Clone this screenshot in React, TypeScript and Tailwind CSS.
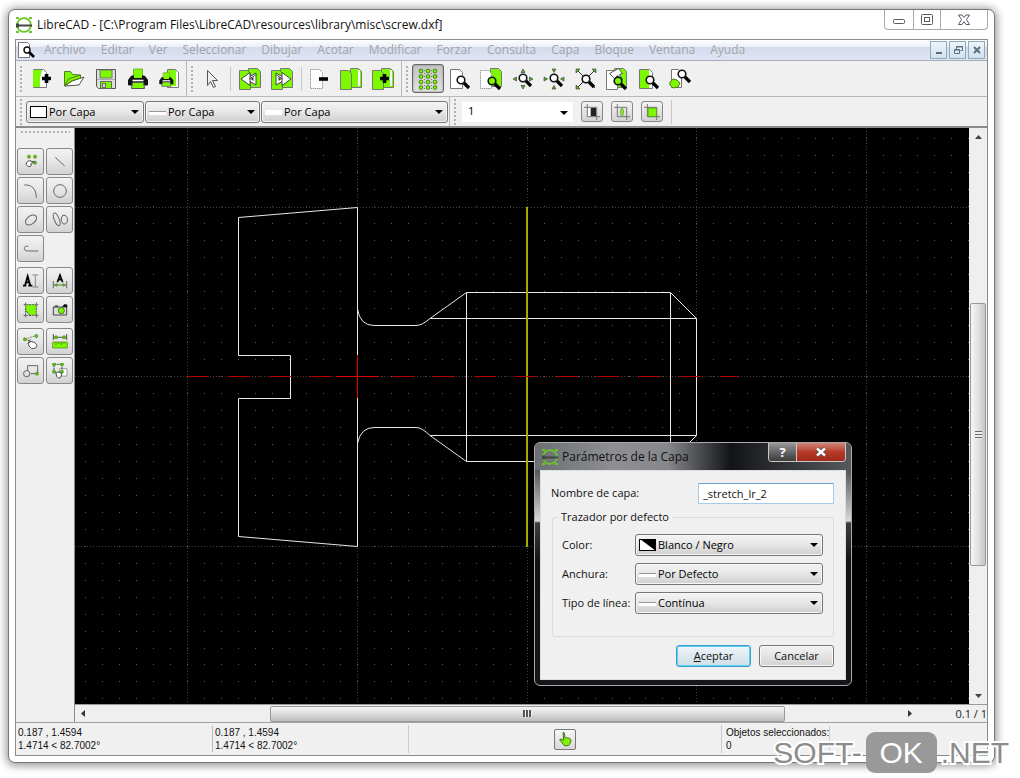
import React, { useState } from 'react';
import clsx from 'clsx';

const GREEN = '#7cf800';

interface IconProps {
  children: React.ReactNode;
  size?: string;
}

const Icon: React.FC<IconProps> = ({ children, size = 'h-6 w-6' }) => (
  <svg viewBox="0 0 24 24" className={clsx('block shrink-0', size)} fill="none" aria-hidden="true">
    {children}
  </svg>
);

/* ---------- shared icon parts ---------- */

const Sheet = ({ x = 3, y = 2, w = 12, h = 19, fill = 'white', dashed = false }) => (
  <path
    d={`M${x + 0.5} ${y + 0.5}h${w - 3}l3 3v${h - 3}h-${w}z`}
    fill={fill}
    stroke="#777"
    strokeDasharray={dashed ? '1 1' : undefined}
  />
);

const Lens = ({ x = 0, y = 0, fill = '#fff' }) => (
  <g transform={`translate(${x} ${y})`}>
    <circle cx="5" cy="5" r="3.8" fill={fill} stroke="#111" strokeWidth="1.6" />
    <path d="M8 8l5 5" stroke="#000" strokeWidth="3.2" />
  </g>
);

const Printer = ({ x = 0, y = 0, k = 1 }) => (
  <g transform={`translate(${x} ${y}) scale(${k})`}>
    <path d="M6 1h9v7h-9z" fill={GREEN} stroke="#79b82b" />
    <path d="M1 12l3-4h13l3 4v5h-4v-3h-11v3h-4z" fill="#111" stroke="#111" strokeLinejoin="round" />
    <path d="M6.5 7h8v3h-8z" fill={GREEN} />
    <path d="M5 14.5h11l1 6h-13z" fill={GREEN} stroke="#555" />
    <path d="M5 12.5h11" stroke="#fff" strokeWidth="1.6" />
  </g>
);

const Plus = ({ x = 0, y = 0 }) => (
  <path d={`M${x} ${y + 4.5}h9M${x + 4.5} ${y}v9`} stroke="#000" strokeWidth="3.6" />
);

const Logo: React.FC = () => (
  <svg viewBox="0 0 18 18" className="block h-[18px] w-[18px] shrink-0" fill="none" aria-hidden="true">
    <circle cx="9" cy="9" r="6.9" stroke="#6cc52a" strokeWidth="1.8" />
    <path d="M1 1h3v2h-3zM14 1h3v2h-3zM1 15h3v2h-3zM14 15h3v2h-3z" fill="#6cc52a" />
    <path d="M1 7.5h3v1h13v2h-13v1h-3z" fill="#444" />
  </svg>
);

/* ---------- main toolbar icons ---------- */

const NewIcon = () => (
  <Icon>
    <Sheet x={3} y={2} w={13} h={18} />
    <path d="M3 3h9l-2 8v9h-7z" fill={GREEN} />
    <Plus x={12} y={7} />
  </Icon>
);

const OpenIcon = () => (
  <Icon>
    <path d="M2.5 19V4.500h6l2 3 8 .5v4" fill={GREEN} stroke="#4d7d1e" />
    <path d="M3 19l7-5 12-4-5 8z" fill="#fff" stroke="#555" />
    <path d="M2.500 19l4-7 12-4v3l-9 3z" fill={GREEN} stroke="#4d7d1e" />
  </Icon>
);

const SaveIcon = () => (
  <Icon>
    <path d="M2.5 2.5h19v19h-17l-2-2z" fill="#ddd" stroke="#555" />
    <path d="M6 3h12v8h-12z" fill={GREEN} stroke="#777" />
    <path d="M6.5 14.5h11v7h-11z" fill={GREEN} stroke="#666" />
    <path d="M8.5 16.5h3v4h-3z" fill="#dcdcdc" stroke="#666" />
    <path d="M3 12.5h18" stroke="#aaa" />
  </Icon>
);

const PrintIcon = () => (
  <Icon>
    <Printer x={1.5} y={1} />
  </Icon>
);

const PreviewIcon = () => (
  <Icon>
    <Sheet x={9} y={2} w={11} h={18} />
    <path d="M10 3h8v16h-8z" fill={GREEN} />
    <Printer x={1} y={5} k={0.7} />
  </Icon>
);

const CursorIcon = () => (
  <Icon>
    <path d="M8.5 3.5v15l3-4 3 6 2-1-3-6h5z" fill="#eee" stroke="#555" />
  </Icon>
);

const StepIcon = ({ forward = false }) => (
  <Icon>
    <Sheet x={10} y={1} w={12} h={19} fill={GREEN} />
    <Sheet x={1} y={3} w={11} h={19} fill={GREEN} />
    <g transform={forward ? 'translate(24 0) scale(-1 1)' : undefined}>
      <path d="M3 12l9-6.500v4l6-3.500v12l-6-3.500v4z" fill="#fff" stroke="#444" />
      <path d="M12 9.500v5M11.500 12l6-4" stroke="#444" />
      <path d="M15.500 10v4l-3-2z" fill="#444" />
    </g>
  </Icon>
);

const RemoveViewIcon = () => (
  <Icon>
    <Sheet x={3} y={2} w={12} h={19} dashed />
    <path d="M12 12h9" stroke="#000" strokeWidth="3.6" />
  </Icon>
);

const ViewsIcon = () => (
  <Icon>
    <Sheet x={11} y={1} w={11} h={19} fill={GREEN} />
    <Sheet x={1} y={3} w={11} h={19} fill={GREEN} />
    <path d="M20 3v16" stroke="#fff" strokeWidth="2" />
  </Icon>
);

const AddViewIcon = () => (
  <Icon>
    <Sheet x={10} y={1} w={12} h={19} fill={GREEN} />
    <Sheet x={1} y={3} w={11} h={19} fill={GREEN} />
    <path d="M20 3v16" stroke="#fff" strokeWidth="2" />
    <Plus x={9} y={7} />
  </Icon>
);

const GridIcon = () => (
  <Icon>
    {[4, 9.5, 15, 20.5].map((y) =>
      [5, 12, 19].map((x) => (
        <rect key={`${x}-${y}`} x={x - 1.7} y={y - 1.7} width="3.400" height="3.400" rx="1" fill={GREEN} stroke="#3f7a12" />
      ))
    )}
    <path d="M8.500 3v19M15.500 3v19" stroke="#777" strokeDasharray="1 2" />
  </Icon>
);

const RedrawIcon = () => (
  <Icon>
    <Sheet x={2} y={2} w={12} h={19} />
    <Lens x={8} y={8} />
  </Icon>
);

const ZoomWindowIcon = () => (
  <Icon>
    <Sheet x={11} y={1} w={11} h={18} fill={GREEN} />
    <Sheet x={1} y={3} w={11} h={18} dashed />
    <Lens x={8} y={9} fill={GREEN} />
  </Icon>
);

const ZoomOutIcon = () => (
  <Icon>
    <path d="M10 5.500l2-3.500 2 3.500zM10 18.500l2 3.500 2-3.500zM5.500 10l-3.500 2 3.500 2zM18.500 10l3.500 2-3.500 2z" fill="#5cb117" stroke="#333" strokeWidth=".6" />
    <Lens x={7} y={6} />
  </Icon>
);

const ZoomInIcon = () => (
  <Icon>
    <path d="M10 2l2 3.500 2-3.500zM10 22l2-3.500 2 3.500zM2 10l3.500 2-3.500 2zM22 10l-3.500 2 3.500 2z" fill="#5cb117" stroke="#333" strokeWidth=".6" />
    <Lens x={7} y={6} />
  </Icon>
);

const ZoomAutoIcon = () => (
  <Icon>
    <path d="M3 3l18 18M21 3l-18 18" stroke="#333" />
    <path d="M2 2h4l-4 4zM22 2h-4l4 4zM2 22h4l-4-4z" fill="#5cb117" stroke="#333" strokeWidth=".6" />
    <Lens x={7} y={7} />
  </Icon>
);

const ZoomPrevIcon = () => (
  <Icon>
    <Sheet x={9} y={1} w={12} h={19} fill={GREEN} />
    <Sheet x={1} y={3} w={11} h={19} />
    <path d="M4.500 6.500l9-5 4 5-3 1 3 5-5-4-3 3z" fill="#fff" stroke="#555" />
    <Lens x={8} y={9} fill={GREEN} />
  </Icon>
);

const ZoomPageIcon = () => (
  <Icon>
    <Sheet x={2} y={2} w={13} h={19} />
    <path d="M3 3h9v18h-9z" fill={GREEN} />
    <Lens x={8} y={8} />
  </Icon>
);

const PanIcon = () => (
  <Icon>
    <Sheet x={3} y={2} w={10} h={18} />
    <path d="M2 15l3-3 4 1 3 3-2 4-5 1-3-3z" fill={GREEN} stroke="#4d7d1e" />
    <Lens x={9} y={2} />
  </Icon>
);

/* ---------- snap / line icons ---------- */

const SnapIcon = ({ kind }: { kind: 'bw' | 'line' | 'fill' }) => (
  <Icon size="h-4 w-4">
    <path d="M5 0v19h19M0 5h19v19" stroke="#777" strokeWidth="1.500" />
    {kind === 'bw' && (
      <>
        <path d="M6 6h7v12h-7z" fill="#fff" />
        <path d="M10 6h8v12h-8z" fill="#222" />
      </>
    )}
    {kind === 'line' && <path d="M12 5c3 3 3 11 0 14c-3-3-3-11 0-14z" fill={GREEN} stroke="#777" />}
    {kind === 'fill' && <path d="M6 6h13v13h-13z" fill={GREEN} stroke="#4d7d1e" />}
  </Icon>
);

/* ---------- left palette icons ---------- */

const gray = '#666';
const Dot = ({ x, y }: { x: number; y: number }) => (
  <circle cx={x} cy={y} r="2.400" fill="#5fc616" stroke="#3f7a12" strokeWidth=".8" />
);

const paletteGroups: { label: string; icon: React.ReactNode }[][] = [
  [
    {
      label: 'Puntos',
      icon: (
        <>
          <Dot x={9} y={4} />
          <Dot x={18} y={4} />
          <Dot x={18} y={13} />
          <path d="M5 13l4-3 8 2-2 1-3 1v4l-4 1-3-3z" fill="#fff" stroke="#333" strokeWidth="1.300" />
        </>
      ),
    },
    { label: 'Líneas', icon: <path d="M5 5l14 13" stroke={gray} strokeWidth="1.500" /> },
    { label: 'Arcos', icon: <path d="M2 3c11-1 18 6 18 19" stroke={gray} strokeWidth="1.500" /> },
    { label: 'Círculos', icon: <circle cx="12" cy="12" r="9.500" stroke={gray} strokeWidth="1.500" /> },
    {
      label: 'Elipses',
      icon: <ellipse cx="12" cy="12" rx="9.500" ry="6" transform="rotate(-38 12 12)" stroke={gray} strokeWidth="1.500" />,
    },
    {
      label: 'Splines',
      icon: (
        <>
          <ellipse cx="7" cy="11" rx="3.600" ry="10" transform="rotate(-22 7 11)" stroke={gray} strokeWidth="1.500" />
          <path d="M16 5h4l3 4v6l-3 3h-3l-3-4v-5z" stroke={gray} strokeWidth="1.500" />
        </>
      ),
    },
    { label: 'Polilíneas', icon: <path d="M8 8c-8-2-8 7-1 7h16" stroke={gray} strokeWidth="1.500" /> },
  ],
  [
    {
      label: 'Texto',
      icon: (
        <>
          <path d="M0 19h5M8 19h6M3 19l4-14 4 14M5 14h5" stroke="#000" strokeWidth="2.800" />
          <path d="M14 3h9M18.500 3v18M14 21h9" stroke="#888" strokeWidth="1.500" />
        </>
      ),
    },
    {
      label: 'Acotar',
      icon: (
        <>
          <path d="M2 12v11M22 12v11M2 18h20" stroke="#666" strokeWidth="1.500" />
          <path d="M8 14l4-11 4 11M9 10h6" stroke="#000" strokeWidth="2.400" />
          <path d="M3 18l5-3v6zM21 18l-5-3v6z" fill="#4eaa10" />
        </>
      ),
    },
    {
      label: 'Sombreado',
      icon: (
        <>
          <path d="M4 4h16v16h-8l-8-7z" fill={GREEN} />
          <path d="M4 1v22M20 1v22M1 4h22M1 20h22" stroke="#555" strokeWidth="1.500" strokeDasharray="3 1" />
          <path d="M4 13l8 8" stroke="#444" />
        </>
      ),
    },
    {
      label: 'Imagen',
      icon: (
        <>
          <path d="M2 7.500h20v12h-20z" fill="#ddd" stroke="#444" strokeWidth="1.500" />
          <path d="M15 7l4-4 4 1v4z" fill="#111" />
          <path d="M4 5h5v3h-5z" fill="#555" />
          <circle cx="14" cy="13" r="4.500" fill={GREEN} stroke="#3f7a12" strokeWidth="1.500" />
        </>
      ),
    },
  ],
  [
    {
      label: 'Modificar',
      icon: (
        <>
          <path d="M3 8l17-6" stroke="#888" strokeWidth="1.500" strokeDasharray="3 1" />
          <Dot x={3} y={8} />
          <Dot x={20} y={3} />
          <path d="M7 9l9 5M11 8l-4 7" stroke="#555" strokeWidth="1.500" />
          <path d="M8 14l4-3 6 2 3 4-2 4-6 1-4-4z" fill="#fff" stroke="#555" strokeWidth="1.500" />
        </>
      ),
    },
    {
      label: 'Medir',
      icon: (
        <>
          <path d="M2 0v9M22 0v9M2 5h20" stroke="#555" strokeWidth="1.500" />
          <Dot x={6} y={5} />
          <Dot x={18} y={5} />
          <path d="M1 12h22v9h-22z" fill={GREEN} stroke="#4d7d1e" />
          <path d="M6 12v5M10 12v3M14 12v5M18 12v3" stroke="#3f7a12" />
        </>
      ),
    },
    {
      label: 'Bloque',
      icon: (
        <>
          <path d="M7 12V4h15v12h-11" stroke="#666" strokeWidth="1.500" />
          <circle cx="5.500" cy="16" r="4.700" stroke="#666" strokeWidth="1.500" />
          <Dot x={21} y={16} />
        </>
      ),
    },
    {
      label: 'Seleccionar',
      icon: (
        <>
          <path d="M11.500 8.500h11v11h-11z" fill="#fff" stroke="#777" />
          <path d="M3 2h12v12h-12z" stroke="#444" strokeWidth="1.500" strokeDasharray="3 1" />
          <Dot x={3} y={2} />
          <Dot x={15} y={2} />
          <Dot x={3} y={13} />
          <Dot x={15} y={13} />
          <path d="M6 16l3-3 5 2v5l-4 3-3-3z" fill="#fff" stroke="#444" strokeWidth="1.500" />
        </>
      ),
    },
  ],
];

/* ---------- small controls ---------- */

const Grip = () => (
  <span className="mx-[3px] h-7 w-1 shrink-0 bg-[radial-gradient(circle,#b0b0b0_1px,transparent_1px)] bg-[size:4px_4px]" />
);

const Divider = () => <span className="h-full w-px shrink-0 bg-[#b8b8b8]" />;
const ShortDivider = () => <span className="h-6 w-px shrink-0 bg-[#c8c8c8]" />;

const ToolButton: React.FC<{ label: string; children: React.ReactNode; checked?: boolean; className?: string }> = ({
  label,
  children,
  checked = false,
  className = 'w-8',
}) => (
  <button
    type="button"
    aria-label={label}
    title={label}
    aria-pressed={checked || undefined}
    className={clsx(
      'flex h-[29px] shrink-0 items-center justify-center rounded-[3px]',
      checked && 'border border-[#666] bg-gradient-to-b from-[#c4c4c4] to-[#e2e2e2] shadow-[inset_0_0_2px_#777]',
      className
    )}
  >
    {children}
  </button>
);

interface ComboProps {
  label: string;
  id?: string;
  options: string[];
  swatch: 'white' | 'line' | 'blank' | 'bw';
  className?: string;
}

const swatches = {
  white: <rect x=".5" y=".5" width="16" height="11" fill="#fff" stroke="#000" />,
  line: (
    <>
      <rect y="5" width="17" height="4" fill="#fff" />
      <path d="M0 5.500h17" stroke="#999" />
    </>
  ),
  blank: <rect y="4" width="17" height="5" fill="#fff" />,
  bw: (
    <>
      <rect x=".5" y=".5" width="16" height="11" fill="#fff" stroke="#000" />
      <path d="M1 0h16v12z" fill="#000" />
    </>
  ),
};

const Caret = () => (
  <svg viewBox="0 0 8 4" className="pointer-events-none absolute top-[9px] right-[5px] h-1 w-2" aria-hidden="true">
    <path d="M0 0h8l-4 4z" fill="#000" />
  </svg>
);

const Combo: React.FC<ComboProps> = ({ label, id, options, swatch, className }) => (
  <div className={clsx('relative h-[22px]', className)}>
    <select
      id={id}
      aria-label={id ? undefined : label}
      className="block h-full w-full appearance-none rounded-[3px] border border-[#777] bg-gradient-to-b from-[#f4f4f4] via-[#e6e6e6] to-[#cfcfcf] pr-5 pl-[22px] text-[11px] leading-4 text-black shadow-[inset_0_0_0_1px_#f6f6f6]"
    >
      {options.map((o) => (
        <option key={o}>{o}</option>
      ))}
    </select>
    <svg viewBox="0 0 17 12" className="pointer-events-none absolute top-[5px] left-1 h-3 w-[17px]" aria-hidden="true">
      {swatches[swatch]}
    </svg>
    <Caret />
  </div>
);

/* ---------- drawing ---------- */

const STEP = 16.97;
const gridDots = () => {
  let d = '';
  for (let i = -26; i < 70; i++) {
    for (let j = -15; j < 45; j++) {
      d += `M${Math.round(357 + i * STEP)} ${Math.round(376 + j * STEP)}.5h1`;
    }
  }
  return d;
};

const Drawing: React.FC = () => (
  <svg className="block h-full w-full" fill="none" role="img" aria-label="screw.dxf">
    <g transform="translate(-75 -128)">
      <path d={gridDots()} stroke="#5c5c5c" shapeRendering="crispEdges" />
      <g stroke="#404040" strokeDasharray="1 2" shapeRendering="crispEdges">
        {[187, 357, 527, 696, 866, 1036, 1205].map((x) => (
          <path key={x} d={`M${x}.5 128v1200`} />
        ))}
        {[207, 376, 546, 716, 886].map((y) => (
          <path key={y} d={`M75 ${y}.5h1800`} />
        ))}
      </g>
      <g stroke="#e8e8e8">
        <path d="M357.500 207.500L238.500 217.500V355.500H290.500V398.500H238.500V536.500L357.500 546.500Z" />
        <path d="M357.500 309Q360 325.500 374 325.500H416Q422 325.500 430 318.500L466.500 292.500H670.500L696.500 318.500V435.500L670.500 461.500H466.500L430 435.500Q422 427.500 416 427.500H374Q361 427.500 357.500 443" />
        <path d="M430 318.500H696.500M430 435.500H696.500M466.500 292.500V461.500M670.500 292.500V461.500" />
      </g>
      <path d="M527 207v340" stroke="#a8a800" strokeWidth="2" />
      <path d="M187 376.500h551" stroke="#b40000" strokeDasharray="22 9 1 9" />
      <path d="M336 376.500h42M357.500 355v43" stroke="#e60000" />
    </g>
  </svg>
);

const LayerDialog: React.FC = () => {
  const [name, setName] = useState('_stretch_lr_2');

  return (
    <div
      role="dialog"
      aria-label="Parámetros de la Capa"
      className="absolute top-[314px] left-[459px] w-[318px] rounded-[6px] border border-[#aaa] bg-[linear-gradient(180deg,#6a6c70_0,#55575b_28px,#d8d8d8_78px,#3a3c40_80px,#101214_120px,#14161a_100%)] px-[5px] pb-[5px] text-[11px] text-[#111]"
    >
      <div className="-mx-[5px] flex h-[27px] items-start rounded-t-[5px] bg-[linear-gradient(90deg,#6c6f73_0,#8d8f92_25%,#85878a_42%,#111316_62%,#25272b_72%,#55585c_100%)] pr-[5px] pl-[6px]">
        <div className="flex h-full items-center gap-[3px]">
          <Logo />
          <span className="text-[12px]">Parámetros de la Capa</span>
        </div>
        <div className="ml-auto flex h-[19px] overflow-hidden rounded-b-[4px] border border-t-0 border-[#c8c8c8]">
          <button
            type="button"
            aria-label="Ayuda"
            className="flex w-7 items-center justify-center border-r border-[#c8c8c8] bg-gradient-to-b from-[#999] via-[#666] to-[#3c3c3c] text-[13px] leading-none font-bold text-white"
          >
            ?
          </button>
          <button
            type="button"
            aria-label="Cerrar"
            className="flex w-12 items-center justify-center bg-gradient-to-b from-[#d0857a] via-[#b53a26] to-[#a02a18]"
          >
            <svg viewBox="0 0 12 10" className="h-[10px] w-3" fill="none">
              <path d="M2 1.500l8 7M10 1.500l-8 7" stroke="#555" strokeWidth="4" />
              <path d="M2 1.500l8 7M10 1.500l-8 7" stroke="#fff" strokeWidth="2.400" />
            </svg>
          </button>
        </div>
      </div>

      <form
        className="border border-[#ddd] bg-[#f0f0f0] px-[11px] pt-[12px] pb-[12px]"
        onSubmit={(e) => e.preventDefault()}
      >
        <div className="-ml-px flex items-center justify-between">
          <label htmlFor="layer-name">Nombre de capa:</label>
          <input
            id="layer-name"
            value={name}
            onChange={(e) => setName(e.target.value)}
            className="h-[21px] w-[136px] rounded-[1px] border border-[#a9cbe8] border-t-[#6f9fcf] bg-white px-1 outline-none"
          />
        </div>

        <fieldset className="mt-[5px] rounded-[3px] border border-[#d3dde6] pr-[10px] pb-[22px] pl-[9px]">
          <legend className="-ml-[4px] px-[3px] leading-4">Trazador por defecto</legend>
          <div className="grid grid-cols-[auto_188px] items-center justify-between gap-y-[7px] pt-[9px]">
            <label htmlFor="layer-color">Color:</label>
            <Combo id="layer-color" label="Color" swatch="bw" options={['Blanco / Negro', 'Rojo', 'Verde']} />
            <label htmlFor="layer-width">Anchura:</label>
            <Combo id="layer-width" label="Anchura" swatch="line" options={['Por Defecto', '0.00mm', '0.05mm']} />
            <label htmlFor="layer-type">Tipo de línea:</label>
            <Combo id="layer-type" label="Tipo de línea" swatch="line" options={['Contínua', 'Punto', 'Guión']} />
          </div>
        </fieldset>

        <div className="mt-2 flex justify-end gap-2">
          <button
            type="submit"
            className="h-[22px] w-[75px] rounded-[3px] border border-[#3c9ccc] bg-gradient-to-b from-[#eef6fa] to-[#cfdde4] shadow-[inset_0_0_0_1px_#5fd0f5]"
          >
            <u>A</u>ceptar
          </button>
          <button
            type="button"
            className="h-[22px] w-[75px] rounded-[3px] border border-[#777] bg-gradient-to-b from-[#f4f4f4] to-[#d2d2d2] shadow-[inset_0_0_0_1px_#f6f6f6]"
          >
            Cancelar
          </button>
        </div>
      </form>
    </div>
  );
};

/* ---------- window parts ---------- */

const menus = [
  'Archivo', 'Editar', 'Ver', 'Seleccionar', 'Dibujar', 'Acotar', 'Modificar',
  'Forzar', 'Consulta', 'Capa', 'Bloque', 'Ventana', 'Ayuda',
];

const TitleBar: React.FC = () => (
  <header className="flex h-[29px] items-start justify-between">
    <div className="flex h-full items-center gap-1">
      <Logo />
      <h1 className="text-[12px] text-[#111]">
        LibreCAD - [C:\Program Files\LibreCAD\resources\library\misc\screw.dxf]
      </h1>
    </div>
    <div className="flex h-5 rounded-b-[4px] border border-t-0 border-[#aaa]">
      <button type="button" aria-label="Minimizar" className="flex w-7 items-center justify-center">
        <svg viewBox="0 0 12 12" className="h-3 w-3" fill="none">
          <rect x=".5" y="5.500" width="11" height="4" rx="1" stroke="#555c66" />
        </svg>
      </button>
      <button type="button" aria-label="Maximizar" className="flex w-7 items-center justify-center border-x border-[#aaa]">
        <svg viewBox="0 0 12 12" className="h-3 w-3" fill="none">
          <rect x=".5" y=".5" width="11" height="10" rx="1" stroke="#555c66" />
          <rect x="3.500" y="3.500" width="5" height="4" stroke="#555c66" />
        </svg>
      </button>
      <button type="button" aria-label="Cerrar" className="flex w-[46px] items-center justify-center">
        <svg viewBox="0 0 12 12" className="h-3 w-3" fill="none">
          <path d="M.5 1h3.500l2 2.500 2-2.500h3.500l-3 4.500 3 5h-3.500l-2-3-2 3h-3.500l3-5z" stroke="#555c66" />
        </svg>
      </button>
    </div>
  </header>
);

const mdiButton =
  'flex h-[18px] w-[17px] items-center justify-center border border-[#8fa9bd] bg-gradient-to-b from-[#eef5fa] to-[#cfe2ee]';

const MenuBar: React.FC = () => (
  <nav className="flex h-[21px] items-center border-b border-[#a5abb8] bg-[linear-gradient(180deg,#fff_0,#e9edf6_35%,#d5dbed_36%,#e0e5f3_100%)] pr-[2px] pl-[2px]">
    <svg viewBox="0 0 18 18" className="block h-[18px] w-[18px] shrink-0" fill="none" aria-hidden="true">
      <path d="M.5 1.500h9l2 2v13h-11z" fill="#fff" stroke="#777" />
      <circle cx="9" cy="9" r="3" fill="#fff" stroke="#111" strokeWidth="1.400" />
      <path d="M11 11l5 5" stroke="#000" strokeWidth="2.600" />
    </svg>
    <div className="ml-2 flex gap-[15px]">
      {menus.map((m) => (
        <button key={m} type="button" className="text-[12px] leading-4 text-[#a3a4a8]">
          {m}
        </button>
      ))}
    </div>
    <div className="ml-auto flex gap-[2px]">
      <button type="button" aria-label="Minimizar documento" className={mdiButton}>
        <svg viewBox="0 0 10 10" className="h-[10px] w-[10px]"><path d="M2 7h6v2h-6z" fill="#5b7183" /></svg>
      </button>
      <button type="button" aria-label="Restaurar documento" className={mdiButton}>
        <svg viewBox="0 0 10 10" className="h-[10px] w-[10px]" fill="none">
          <path d="M3.500 4V1.500h6v4h-2M3 2h7" stroke="#5b7183" />
          <path d="M1.500 4.500h5v4h-5zM1 5h6" stroke="#5b7183" />
        </svg>
      </button>
      <button type="button" aria-label="Cerrar documento" className={mdiButton}>
        <svg viewBox="0 0 10 10" className="h-[10px] w-[10px]" fill="none">
          <path d="M2 2l6 6M8 2l-6 6" stroke="#5b7183" strokeWidth="2" />
        </svg>
      </button>
    </div>
  </nav>
);

const MainToolbar: React.FC = () => (
  <div className="flex h-9 items-center border-b border-[#b8b8b8]">
    <Grip />
    <ToolButton label="Nuevo"><NewIcon /></ToolButton>
    <ToolButton label="Abrir"><OpenIcon /></ToolButton>
    <ToolButton label="Guardar"><SaveIcon /></ToolButton>
    <ToolButton label="Imprimir"><PrintIcon /></ToolButton>
    <ToolButton label="Vista previa"><PreviewIcon /></ToolButton>
    <Divider />
    <Grip />
    <ToolButton label="Seleccionar" className="w-7"><CursorIcon /></ToolButton>
    <span className="w-[5px]" />
    <ShortDivider />
    <span className="w-[3px]" />
    <ToolButton label="Deshacer"><StepIcon /></ToolButton>
    <ToolButton label="Rehacer"><StepIcon forward /></ToolButton>
    <span className="w-[3px]" />
    <ShortDivider />
    <span className="w-px" />
    <ToolButton label="Cortar"><RemoveViewIcon /></ToolButton>
    <ToolButton label="Copiar"><ViewsIcon /></ToolButton>
    <ToolButton label="Pegar"><AddViewIcon /></ToolButton>
    <span className="w-[2px]" />
    <Divider />
    <Grip />
    <ToolButton label="Rejilla" checked><GridIcon /></ToolButton>
    <div className="flex w-[252px] shrink-0 justify-between">
      <ToolButton className="w-[31px]" label="Redibujar"><RedrawIcon /></ToolButton>
      <ToolButton className="w-[31px]" label="Zoom ventana"><ZoomWindowIcon /></ToolButton>
      <ToolButton className="w-[31px]" label="Alejar"><ZoomOutIcon /></ToolButton>
      <ToolButton className="w-[31px]" label="Acercar"><ZoomInIcon /></ToolButton>
      <ToolButton className="w-[31px]" label="Zoom automático"><ZoomAutoIcon /></ToolButton>
      <ToolButton className="w-[31px]" label="Vista anterior"><ZoomPrevIcon /></ToolButton>
      <ToolButton className="w-[31px]" label="Zoom página"><ZoomPageIcon /></ToolButton>
      <ToolButton className="w-[31px]" label="Desplazar"><PanIcon /></ToolButton>
    </div>
  </div>
);

const snapButton =
  'flex h-[21px] w-[22px] shrink-0 items-center justify-center rounded-[3px] border border-[#888] bg-gradient-to-b from-[#f4f4f4] to-[#d2d2d2]';

const PenToolbar: React.FC = () => (
  <div className="flex h-[31px] items-center border-b-2 border-[#888c90]">
    <Grip />
    <div className="flex shrink-0 gap-px">
      <Combo label="Color" swatch="white" options={['Por Capa', 'Por Bloque']} className="w-[118px]" />
      <Combo label="Anchura" swatch="line" options={['Por Capa', 'Por Bloque']} className="w-[115px]" />
      <Combo label="Tipo de línea" swatch="blank" options={['Por Capa', 'Por Bloque']} className="w-[187px]" />
    </div>
    <span className="w-px" />
    <Divider />
    <Grip />
    <div className="relative ml-[2px] h-5 w-[111px] shrink-0">
      <select aria-label="Escala" className="block h-full w-full appearance-none bg-white pl-[6px] text-[11px]">
        <option>1</option>
        <option>2</option>
      </select>
      <Caret />
    </div>
    <div className="mr-2 ml-2 flex gap-2">
      <button type="button" aria-label="Borde" className={snapButton}><SnapIcon kind="bw" /></button>
      <button type="button" aria-label="Línea" className={snapButton}><SnapIcon kind="line" /></button>
      <button type="button" aria-label="Relleno" className={snapButton}><SnapIcon kind="fill" /></button>
    </div>
    <ShortDivider />
  </div>
);

const Palette: React.FC = () => (
  <aside className="w-[58px] shrink-0 px-[1px] pt-[2px]">
    <span className="mx-[3px] block h-1 bg-[radial-gradient(circle,#b0b0b0_1px,transparent_1px)] bg-[size:4px_4px]" />
    <div className="mt-[14px] flex flex-col gap-[5px]">
      {paletteGroups.map((group, i) => (
        <div key={i} className="grid grid-cols-2 gap-[2px]">
          {group.map((tool) => (
            <button
              key={tool.label}
              type="button"
              title={tool.label}
              aria-label={tool.label}
              className="flex h-[27px] items-center justify-center rounded-[3px] border border-[#888] bg-gradient-to-b from-[#f2f2f2] via-[#e6e6e6] to-[#d2d2d2]"
            >
              <Icon size="h-4 w-4">{tool.icon}</Icon>
            </button>
          ))}
        </div>
      ))}
    </div>
  </aside>
);

const VerticalScrollbar: React.FC = () => (
  <div className="flex w-[18px] shrink-0 flex-col items-center bg-[#efefef]">
    <svg viewBox="0 0 7 4" className="mt-[7px] h-1 w-[7px]"><path d="M0 4h7l-3.500-4z" fill="#444" /></svg>
    <div className="grow-[167]" />
    <div className="flex w-4 grow-[258] items-center justify-center rounded-[2px] border border-[#999] bg-gradient-to-r from-[#f5f5f5] via-[#e2e2e4] to-[#c4c4c8]">
      <span className="h-2 w-[7px] bg-[repeating-linear-gradient(180deg,#666_0,#666_1px,#eee_1px,#eee_3px)]" />
    </div>
    <div className="grow-[130]" />
    <svg viewBox="0 0 7 4" className="mb-[6px] h-1 w-[7px]"><path d="M0 0h7l-3.500 4z" fill="#444" /></svg>
  </div>
);

const HorizontalScrollbar: React.FC = () => (
  <div className="flex h-[18px] shrink-0 items-center border-t border-[#999] bg-[#efefef]">
    <svg viewBox="0 0 4 7" className="ml-[6px] h-[7px] w-1"><path d="M4 0v7l-4-3.500z" fill="#333" /></svg>
    <div className="grow-[187]" />
    <div className="flex h-4 grow-[510] items-center justify-center rounded-[2px] border border-[#999] bg-gradient-to-b from-[#f5f5f5] via-[#dcdcdc] to-[#bcbcbc]">
      <span className="h-[7px] w-[9px] bg-[repeating-linear-gradient(90deg,#555_0,#555_2px,#eee_2px,#eee_3px)]" />
    </div>
    <div className="grow-[125]" />
    <svg viewBox="0 0 4 7" className="h-[7px] w-1"><path d="M0 0v7l4-3.500z" fill="#333" /></svg>
    <span className="w-[75px] text-right text-[11px] leading-4 text-[#222]">0.1 / 1</span>
  </div>
);

const Coordinates: React.FC<{ className?: string }> = ({ className }) => (
  <div className={clsx('shrink-0', className)}>
    <p>0.187 , 1.4594</p>
    <p>1.4714 &lt; 82.7002°</p>
  </div>
);

const StatusBar: React.FC = () => (
  <footer className="flex h-[33px] shrink-0 items-center border-t border-[#9aa0a6] font-['Liberation_Sans',Arial,sans-serif] text-[10px] leading-[13px] text-[#111]">
    <Coordinates className="w-[196px] pl-[2px]" />
    <Coordinates className="w-[196px] border-l border-[#bbb] pl-[2px]" />
    <div className="flex h-7 grow items-center justify-center border-x border-[#ccc]">
      <button
        type="button"
        aria-label="Ratón"
        className="flex h-[21px] w-[22px] items-center justify-center rounded-[2px] border border-[#777] bg-gradient-to-b from-[#f7f7f7] to-[#d8d8d8]"
      >
        <Icon size="h-4 w-4">
          <path d="M9 2l2 1 1 7 7 1 2 3-2 6-2 2h-6l-7-9 2-1 4 2z" fill={GREEN} stroke="#4a6e22" strokeWidth="1.500" />
        </Icon>
      </button>
    </div>
    <div className="w-[108px] shrink-0 border-r border-[#ccc] pl-1 whitespace-nowrap">
      <p>Objetos seleccionados:</p>
      <p>0</p>
    </div>
    <div className="w-[157px] shrink-0" />
  </footer>
);

const Watermark: React.FC = () => (
  <div className="pointer-events-none absolute right-[11px] bottom-[5px] flex items-center gap-1 font-['Liberation_Sans',Arial,sans-serif] text-[30px] leading-none text-[#8c8c8c]">
    <span className="[paint-order:stroke_fill] [-webkit-text-stroke:4px_#fff]">SOFT-</span>
    <span className="flex h-[41px] w-[71px] items-center justify-center rounded-[9px] bg-[#999] text-white">OK</span>
    <span className="[paint-order:stroke_fill] [-webkit-text-stroke:4px_#fff]">.NET</span>
  </div>
);

const App: React.FC = () => {
  return (
    <div className="relative flex h-screen min-h-[600px] bg-white pt-[9px] pr-[25px] pb-[15px] pl-2 font-['Open_Sans','Noto_Sans',sans-serif]">
      <div className="flex min-w-0 flex-1 flex-col rounded-[7px] border border-[#777] bg-white px-[6px] pb-[6px] shadow-[0_1px_9px_2px_#9a9a9a]">
        <TitleBar />
        <main className="flex min-h-0 flex-1 flex-col border border-[#8c8c8c] bg-[#f0f0f0]">
          <MenuBar />
          <MainToolbar />
          <PenToolbar />
          <div className="flex min-h-0 flex-1">
            <Palette />
            <div className="flex min-w-0 flex-1 flex-col border-l border-[#888c90]">
              <div className="flex min-h-0 flex-1">
                <div className="relative min-w-0 flex-1 bg-black">
                  <Drawing />
                  <LayerDialog />
                </div>
                <VerticalScrollbar />
              </div>
              <HorizontalScrollbar />
            </div>
          </div>
          <StatusBar />
        </main>
      </div>
      <Watermark />
    </div>
  );
};

export default App;
